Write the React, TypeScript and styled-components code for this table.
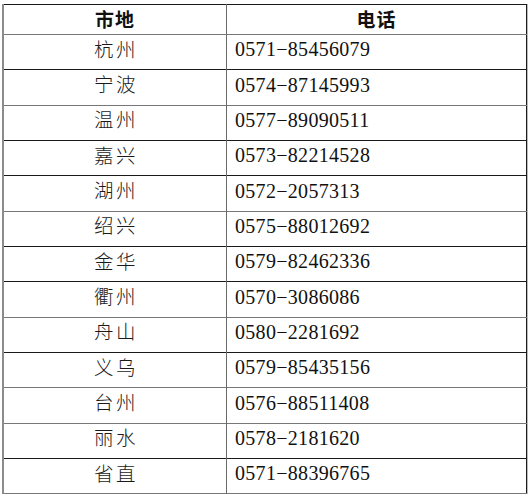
import styled, { createGlobalStyle } from "styled-components"

const GlobalStyle = createGlobalStyle`
  html, body {
    margin: 0;
    padding: 0;
    background: #fff;
  }
`

const Sheet = styled.table`
  margin: 4px 0 0 2px;
  width: 525px;
  border-collapse: collapse;
  table-layout: fixed;
  border-top: 1px solid #1a1a1a;
  border-left: 2px solid #8c8c8c;
  border-right: 1px solid #1a1a1a;
  box-shadow: 1px 0 0 #bdbdbd;
`

const HeadCell = styled.th<{ $first?: boolean }>`
  height: 28px;
  padding: 0 0 1px;
  font-family: "Noto Sans CJK SC", "Noto Sans", sans-serif;
  font-weight: 700;
  font-size: 19px;
  line-height: 22px;
  letter-spacing: 1px;
  color: #111;
  text-align: center;
  vertical-align: middle;
  border-bottom: 1px solid #777;
  border-right: ${(p) => (p.$first ? "1px solid #6a6a6a" : "none")};
  width: ${(p) => (p.$first ? "222px" : "auto")};
`

const Row = styled.tr<{ $light?: boolean }>`
  height: 35.35px;
  border-bottom: 1px solid ${(p) => (p.$light ? "#777" : "#1a1a1a")};
`

const CityCell = styled.td`
  padding: 0 0 7px 2px;
  font-family: "Noto Sans CJK SC", sans-serif;
  font-weight: 300;
  font-size: 19.5px;
  line-height: 22px;
  letter-spacing: 2.5px;
  color: #1a1a1a;
  text-align: center;
  vertical-align: middle;
  border-right: 1px solid #6a6a6a;
`

const PhoneCell = styled.td`
  padding: 0 0 6px 8px;
  font-family: "Liberation Serif", "Times New Roman", serif;
  font-size: 20px;
  line-height: 22px;
  letter-spacing: 0.3px;
  color: #111;
  text-align: left;
  vertical-align: middle;
`

const rows: [string, string, boolean][] = [
  ["杭州", "0571−85456079", false],
  ["宁波", "0574−87145993", true],
  ["温州", "0577−89090511", false],
  ["嘉兴", "0573−82214528", false],
  ["湖州", "0572−2057313", true],
  ["绍兴", "0575−88012692", false],
  ["金华", "0579−82462336", false],
  ["衢州", "0570−3086086", true],
  ["舟山", "0580−2281692", false],
  ["义乌", "0579−85435156", true],
  ["台州", "0576−88511408", true],
  ["丽水", "0578−2181620", false],
  ["省直", "0571−88396765", true],
]

export default function App() {
  return (
    <>
      <GlobalStyle />
      <Sheet>
        <thead>
          <tr>
            <HeadCell $first>市地</HeadCell>
            <HeadCell>电话</HeadCell>
          </tr>
        </thead>
        <tbody>
          {rows.map(([city, phone, light]) => (
            <Row key={city} $light={light}>
              <CityCell>{city}</CityCell>
              <PhoneCell>{phone}</PhoneCell>
            </Row>
          ))}
        </tbody>
      </Sheet>
    </>
  )
}
